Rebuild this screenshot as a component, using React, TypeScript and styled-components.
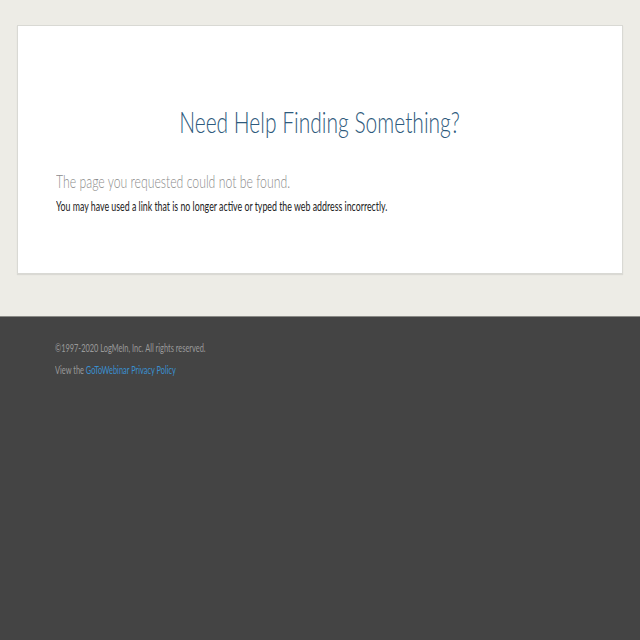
import React from "react";
import styled, { createGlobalStyle } from "styled-components";

const Global = createGlobalStyle`
  html, body { margin: 0; padding: 0; background: #444444; }
  body { font-family: Lato, "Open Sans", sans-serif; }
`;

const Page = styled.div`
  display: flex;
  flex-direction: column;
  min-height: 640px;
`;

const Main = styled.main`
  background: #edece6;
  padding: 25px 17px 42px 17px;
`;

const Card = styled.section`
  background: #ffffff;
  border: 1px solid #d9d9d4;
  box-shadow: 0 1px 1px rgba(0, 0, 0, 0.08);
  height: 249px;
  padding: 78px 0 0 38px;
  box-sizing: border-box;
  display: flex;
  flex-direction: column;
`;

const Squeeze = styled.span<{ $origin?: string }>`
  display: inline-block;
  white-space: nowrap;
  transform: scaleX(0.7);
  transform-origin: ${(p) => p.$origin || "left"} center;
`;

const Heading = styled.h1`
  margin: 0 38px 0 0;
  font-weight: 300;
  font-size: 30px;
  line-height: 34px;
  color: #2e5a7c;
  text-align: center;
`;

const Sub = styled.h2`
  margin: 33px 0 0 0;
  font-weight: 300;
  font-size: 17.5px;
  line-height: 22px;
  color: #8c8c8c;
`;

const Body = styled.p`
  margin: 7px 0 0 0;
  font-weight: 400;
  font-size: 12.6px;
  line-height: 14px;
  color: #222222;
`;

const Footer = styled.footer`
  flex: 1;
  background: #444444;
  border-top: 1px solid #8a8a86;
  padding: 24px 55px;
  display: flex;
  flex-direction: column;
  gap: 8px;
`;

const FootLine = styled.div`
  font-size: 10.6px;
  line-height: 14px;
  color: #9a9a9a;
`;

const Link = styled.a`
  color: #3a8fcf;
  text-decoration: none;
`;

export default function App() {
  return (
    <Page>
      <Global />
      <Main>
        <Card>
          <Heading>
            <Squeeze $origin="center">Need Help Finding Something?</Squeeze>
          </Heading>
          <Sub>
            <Squeeze>The page you requested could not be found.</Squeeze>
          </Sub>
          <Body>
            <Squeeze>
              You may have used a link that is no longer active or typed the web address incorrectly.
            </Squeeze>
          </Body>
        </Card>
      </Main>
      <Footer>
        <FootLine>
          <Squeeze>©1997-2020 LogMeIn, Inc. All rights reserved.</Squeeze>
        </FootLine>
        <FootLine>
          <Squeeze>
            View the <Link href="#">GoToWebinar Privacy Policy</Link>
          </Squeeze>
        </FootLine>
      </Footer>
    </Page>
  );
}
